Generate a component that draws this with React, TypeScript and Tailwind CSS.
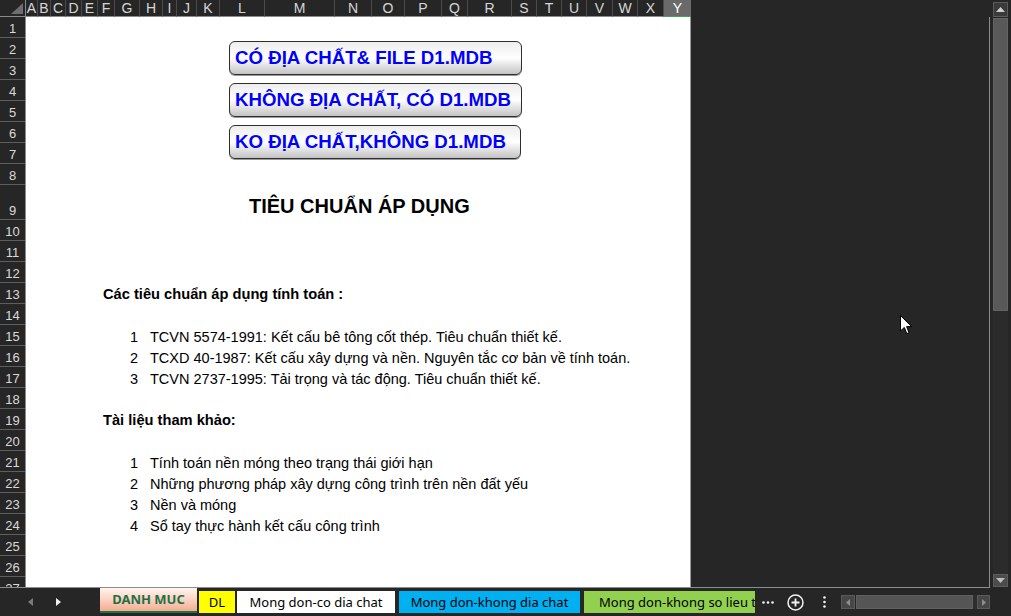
import React from "react";

const COLS: [string, string][] = [
  ["A", "w-[12px]"], ["B", "w-[13px]"], ["C", "w-[15px]"], ["D", "w-[16px]"], ["E", "w-[16px]"],
  ["F", "w-[17px]"], ["G", "w-[25px]"], ["H", "w-[23px]"], ["I", "w-[14px]"], ["J", "w-[20px]"],
  ["K", "w-[23px]"], ["L", "w-[45px]"], ["M", "w-[70px]"], ["N", "w-[37px]"], ["O", "w-[33px]"],
  ["P", "w-[37px]"], ["Q", "w-[26px]"], ["R", "w-[44px]"], ["S", "w-[25px]"], ["T", "w-[25px]"],
  ["U", "w-[25px]"], ["V", "w-[26px]"], ["W", "w-[25px]"], ["X", "w-[26px]"],
];

const ROWS: number[] = Array.from({ length: 27 }, (_, i) => i + 1);

const FONT = "font-['Liberation_Sans',Arial,sans-serif]";
const UI = "font-['Noto_Sans','Liberation_Sans',sans-serif]";

function SheetButton({ w, children }: { w: string; children: React.ReactNode }) {
  return (
    <div
      className={`${w} h-[34px] rounded-[6px] border border-[#2e2e2e] bg-gradient-to-b from-[#ededed] via-white to-[#c4c4c4] flex items-center pl-[5px] text-[18.67px] font-bold text-[#0000ff] leading-none whitespace-nowrap shadow-[0_1px_0_#9a9a9a]`}
    >
      {children}
    </div>
  );
}

function Item({ n, children }: { n: number; children: React.ReactNode }) {
  return (
    <div className="h-[21px] shrink-0 flex leading-[21px] pt-[2px] text-[14.5px] whitespace-nowrap">
      <div className="w-[112px] text-right">{n}</div>
      <div className="ml-[12px]">{children}</div>
    </div>
  );
}

function Empty() {
  return <div className="h-[21px] shrink-0" />;
}

function Heading({ children }: { children: React.ReactNode }) {
  return (
    <div className="h-[21px] shrink-0 pl-[77px] leading-[21px] pt-px text-[14.67px] font-bold whitespace-nowrap">
      {children}
    </div>
  );
}

export default function App() {
  return (
    <div className={`relative w-[1011px] h-[616px] bg-[#262626] overflow-hidden flex flex-col ${FONT}`}>
      {/* top region */}
      <div className="flex h-[587px] shrink-0">
        <div className="w-[990px] flex flex-col">
          {/* column header */}
          <div className="h-[17px] flex shrink-0">
            <div className="w-[26px] h-[17px] border-r border-b border-[#8a8a8a] relative">
              <svg className="absolute left-[11px] top-[3px]" width="12" height="11" viewBox="0 0 12 11">
                <polygon points="12,0 12,11 0,11" fill="#6e6e6e" />
              </svg>
            </div>
            {COLS.map(([c, w]) => (
              <div
                key={c}
                className={`${w} h-[17px] border-r border-b border-r-[#4a4a4a] border-b-[#8a8a8a] flex items-center justify-center text-[14px] text-[#d6d6d6] leading-none`}
              >
                {c}
              </div>
            ))}
            <div className="w-[27px] h-[17px] bg-[#6a6a6a] border-b border-[#3fa35f] flex items-center justify-center text-[14px] text-white leading-none">
              Y
            </div>
          </div>
          {/* body */}
          <div className="flex h-[570px] overflow-hidden">
            {/* row headers */}
            <div className="w-[26px] shrink-0 flex flex-col border-r border-[#8a8a8a]">
              {ROWS.map((r) => (
                <div
                  key={r}
                  className={`${r === 9 ? "h-[35px]" : "h-[21px]"} shrink-0 border-b border-[#5e5e5e] flex items-end justify-center pb-[2px] text-[13px] text-[#dadada] leading-none`}
                >
                  {r}
                </div>
              ))}
            </div>
            {/* sheet */}
            <div className="w-[665px] shrink-0 bg-white flex flex-col text-black border-r border-[#9a9a9a]">
              <div className="h-[168px] shrink-0 pt-[24px] pl-[203px] flex flex-col gap-[8px]">
                <SheetButton w="w-[293px]">CÓ ĐỊA CHẤT&amp; FILE D1.MDB</SheetButton>
                <SheetButton w="w-[293px]">KHÔNG ĐỊA CHẤT, CÓ D1.MDB</SheetButton>
                <SheetButton w="w-[292px]">KO ĐỊA CHẤT,KHÔNG D1.MDB</SheetButton>
              </div>
              <div className="h-[35px] shrink-0 flex items-end pb-[4px] pl-[223px] text-[20px] font-bold leading-none whitespace-nowrap">
                TIÊU CHUẨN ÁP DỤNG
              </div>
              <Empty />
              <Empty />
              <Empty />
              <Heading>Các tiêu chuẩn áp dụng tính toán :</Heading>
              <Empty />
              <Item n={1}>TCVN 5574-1991: Kết cấu bê tông cốt thép. Tiêu chuẩn thiết kế.</Item>
              <Item n={2}>TCXD 40-1987: Kết cấu xây dựng và nền. Nguyên tắc cơ bản về tính toán.</Item>
              <Item n={3}>TCVN 2737-1995: Tải trọng và tác động. Tiêu chuẩn thiết kế.</Item>
              <Empty />
              <Heading>Tài liệu tham khảo:</Heading>
              <Empty />
              <Item n={1}>Tính toán nền móng theo trạng thái giới hạn</Item>
              <Item n={2}>Những phương pháp xây dựng công trình trên nền đất yếu</Item>
              <Item n={3}>Nền và móng</Item>
              <Item n={4}>Sổ tay thực hành kết cấu công trình</Item>
              <div className="flex-1" />
            </div>
            {/* dark area */}
            <div className="flex-1 border-r border-[#8c8c8c]" />
          </div>
        </div>
        {/* vertical scrollbar */}
        <div className="w-[21px] shrink-0 flex flex-col pl-[3px] pt-[2px]">
          <div className="w-[15px] h-[15px] shrink-0 bg-[#3a3a3a] border border-[#5c5c5c] flex items-center justify-center">
            <svg width="9" height="5" viewBox="0 0 9 5">
              <polygon points="4.5,0 9,5 0,5" fill="#cfcfcf" />
            </svg>
          </div>
          <div className="w-[15px] h-[293px] shrink-0 mt-px bg-[#595959] border border-[#636363]" />
          <div className="w-[15px] flex-1 bg-[#2b2b2b]" />
          <div className="w-[15px] h-[13px] shrink-0 bg-[#4c4c4c] border border-[#5c5c5c] flex items-center justify-center">
            <svg width="9" height="5" viewBox="0 0 9 5">
              <polygon points="0,0 9,0 4.5,5" fill="#bdbdbd" />
            </svg>
          </div>
        </div>
      </div>

      {/* tab bar */}
      <div className="flex h-[29px] shrink-0">
        <div className={`w-[990px] shrink-0 border-t border-[#8c8c8c] flex items-start ${UI}`}>
          <div className="w-[100px] h-[28px] shrink-0 flex items-center">
            <svg className="ml-[28px]" width="5" height="8" viewBox="0 0 5 8">
              <polygon points="5,0 5,8 0,4" fill="#7a7a7a" />
            </svg>
            <svg className="ml-[23px]" width="5" height="8" viewBox="0 0 5 8">
              <polygon points="0,0 5,4 0,8" fill="#f0f0f0" />
            </svg>
          </div>
          <div className="w-[655px] h-[28px] shrink-0 overflow-hidden flex items-start">
            <div className="w-[97px] h-[25px] shrink-0 bg-gradient-to-b from-[#fff4ef] via-[#fbd2c2] to-[#f4ac92] border-b-2 border-[#217346] flex items-center justify-center text-[13px] font-bold text-[#1e7145] leading-none">
              DANH MUC
            </div>
            <div className="w-[36px] h-[22px] mt-[3px] ml-[2px] shrink-0 bg-[#ffff00] flex items-center justify-center text-[13px] text-black leading-none">
              DL
            </div>
            <div className="w-[158px] h-[22px] mt-[3px] ml-[2px] shrink-0 bg-white flex items-center justify-center text-[13px] text-black leading-none whitespace-nowrap">
              Mong don-co dia chat
            </div>
            <div className="w-[181px] h-[22px] mt-[3px] ml-[4px] shrink-0 bg-[#00b0f0] flex items-center justify-center text-[13px] text-black leading-none whitespace-nowrap">
              Mong don-khong dia chat
            </div>
            <div className="w-[230px] h-[22px] mt-[3px] ml-[4px] shrink-0 bg-[#92d050] flex items-center pl-[15px] text-[13px] text-black leading-none whitespace-nowrap">
              Mong don-khong so lieu tinh toan
            </div>
          </div>
          <div className="ml-[3px] w-[20px] h-[28px] shrink-0 flex items-center justify-center">
            <svg width="12" height="3" viewBox="0 0 12 3">
              <circle cx="1.5" cy="1.5" r="1.3" fill="#f2f2f2" />
              <circle cx="6" cy="1.5" r="1.3" fill="#f2f2f2" />
              <circle cx="10.5" cy="1.5" r="1.3" fill="#f2f2f2" />
            </svg>
          </div>
          <div className="ml-[7px] w-[20px] h-[28px] shrink-0 flex items-center justify-center">
            <svg width="17" height="17" viewBox="0 0 17 17">
              <circle cx="8.5" cy="8.5" r="7.5" fill="none" stroke="#f2f2f2" strokeWidth="1.5" />
              <path d="M8.5 4.5v8M4.5 8.5h8" stroke="#f2f2f2" strokeWidth="1.8" />
            </svg>
          </div>
          <div className="ml-[9px] w-[20px] h-[28px] shrink-0 flex items-center justify-center">
            <svg width="3" height="12" viewBox="0 0 3 12">
              <circle cx="1.5" cy="1.5" r="1.3" fill="#f2f2f2" />
              <circle cx="1.5" cy="6" r="1.3" fill="#f2f2f2" />
              <circle cx="1.5" cy="10.5" r="1.3" fill="#f2f2f2" />
            </svg>
          </div>
          <div className="ml-[7px] w-[149px] h-[28px] shrink-0 flex items-center">
            <div className="w-[14px] h-[14px] shrink-0 bg-[#474747] border border-[#5a5a5a] flex items-center justify-center">
              <svg width="4" height="7" viewBox="0 0 4 7">
                <polygon points="4,0 4,7 0,3.5" fill="#8e8e8e" />
              </svg>
            </div>
            <div className="w-[117px] h-[14px] shrink-0 ml-px bg-[#555555] border border-[#606060]" />
            <div className="w-[4px] h-[14px] shrink-0 bg-[#2d2d2d]" />
            <div className="w-[13px] h-[14px] shrink-0 bg-[#474747] border border-[#5a5a5a] flex items-center justify-center">
              <svg width="4" height="7" viewBox="0 0 4 7">
                <polygon points="0,0 4,3.5 0,7" fill="#8e8e8e" />
              </svg>
            </div>
          </div>
        </div>
        <div className="flex-1" />
      </div>

      {/* mouse pointer */}
      <svg className="absolute left-[900px] top-[315px]" width="13" height="20" viewBox="0 0 13 20">
        <path d="M0.5 0.5 L0.5 16 L4.3 12.4 L6.8 18.6 L9 17.7 L6.6 11.6 L11.6 11.6 Z" fill="#ffffff" stroke="#000000" strokeWidth="1" />
      </svg>
    </div>
  );
}
